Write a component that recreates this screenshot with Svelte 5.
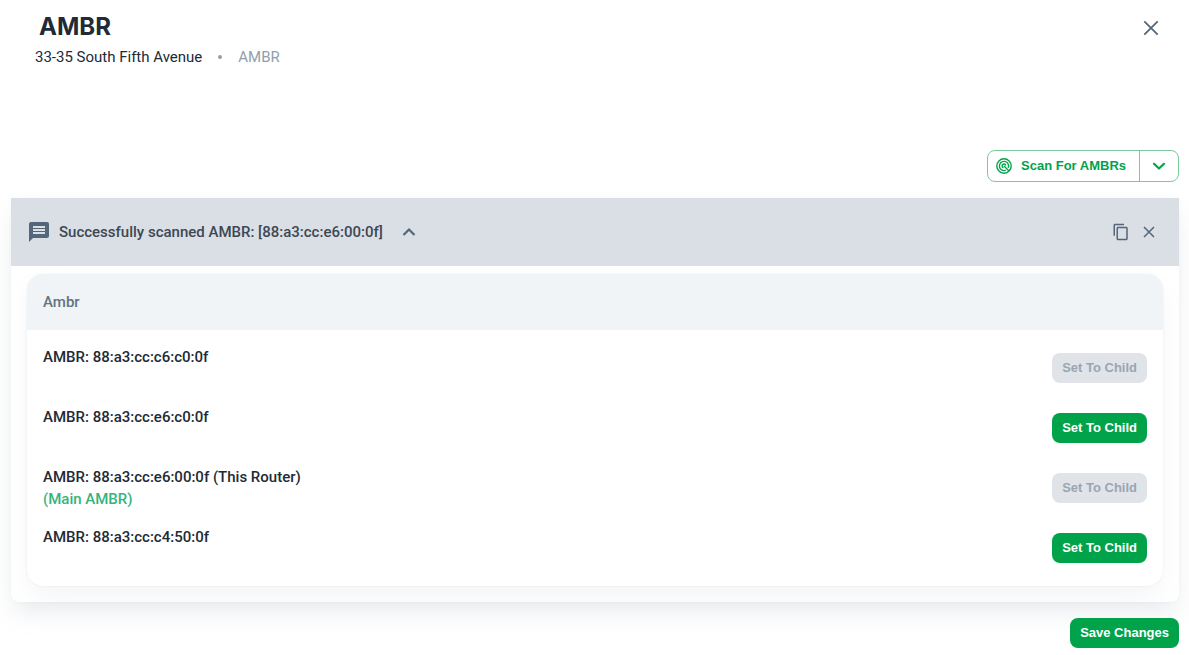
<script lang="ts">
  type Router = { mac: string; current?: boolean; main?: boolean; canSetChild: boolean };

  let title = "AMBR";
  let address = "33-35 South Fifth Avenue";
  let expanded = true;
  let showResult = true;
  let scanned = "88:a3:cc:e6:00:0f";

  let routers: Router[] = [
    { mac: "88:a3:cc:c6:c0:0f", canSetChild: false },
    { mac: "88:a3:cc:e6:c0:0f", canSetChild: true },
    { mac: "88:a3:cc:e6:00:0f", current: true, main: true, canSetChild: false },
    { mac: "88:a3:cc:c4:50:0f", canSetChild: true },
  ];

  function setToChild(mac: string) {
    routers = routers.map((r) => (r.mac === mac ? { ...r, canSetChild: false } : r));
  }

  function copyMessage() {
    navigator.clipboard?.writeText(`Successfully scanned AMBR: [${scanned}]`);
  }
</script>

<div class="dialog">
  <header class="header">
    <div>
      <h1>{title}</h1>
      <div class="subtitle">
        <span>{address}</span>
        <span class="dot"></span>
        <span class="muted">AMBR</span>
      </div>
    </div>
    <button class="icon-button" type="button" aria-label="Close">
      <svg width="24" height="24" viewBox="0 0 24 24"><path d="m5.300 5.300 13.400 13.400M18.700 5.300 5.300 18.700" fill="none" stroke="currentColor" stroke-width="1.800" /></svg>
    </button>
  </header>

  <div class="toolbar">
    <div class="split-button">
      <button class="scan" type="button">
        <svg width="16" height="16" viewBox="0 0 16 16" fill="none" stroke="currentColor" stroke-width="1.4">
          <circle cx="8" cy="8" r="7.200" />
          <path d="M9.800 12.200A4.600 4.600 0 1 1 12.200 9.800" />
          <path d="M7.500 9.800A1.900 1.900 0 1 1 9.800 7.500M8 8l5 5" />
        </svg>
        Scan For AMBRs
      </button>
      <button class="more" type="button" aria-label="More scan options">
        <svg width="14" height="14" viewBox="0 0 14 14"><path d="M2 4.800 7 9.500l5-4.700" fill="none" stroke="currentColor" stroke-width="2.200" stroke-linecap="round" stroke-linejoin="round" /></svg>
      </button>
    </div>
  </div>

  {#if showResult}
    <section class="result">
      <div class="result-bar">
        <svg class="message-icon" width="24" height="24" viewBox="0 0 24 24"><path fill="currentColor" d="M20 2H4.010c-1.100 0-2 .9-2 2L2 22l4-4h14c1.100 0 2-.9 2-2V4c0-1.100-.9-2-2-2zm-2 12H6v-2h12v2zm0-3H6V9h12v2zm0-3H6V6h12v2z" /></svg>
        <span class="message">Successfully scanned AMBR: [{scanned}]</span>
        <button class="icon-button" type="button" aria-label="Toggle details" aria-expanded={expanded} on:click={() => (expanded = !expanded)}>
          <svg class:collapsed={!expanded} width="20" height="20" viewBox="0 0 20 20"><path d="M4.500 13 10 7.500l5.500 5.500" fill="none" stroke="currentColor" stroke-width="2.200" /></svg>
        </button>
        <div class="result-actions">
          <button class="icon-button" type="button" aria-label="Copy message" on:click={copyMessage}>
            <svg width="18" height="18" viewBox="0 0 24 24"><path fill="currentColor" d="M16 1H4c-1.100 0-2 .9-2 2v14h2V3h12V1zm3 4H8c-1.100 0-2 .9-2 2v14c0 1.100.9 2 2 2h11c1.100 0 2-.9 2-2V7c0-1.100-.9-2-2-2zm0 16H8V7h11v14z" /></svg>
          </button>
          <button class="icon-button" type="button" aria-label="Dismiss" on:click={() => (showResult = false)}>
            <svg width="18" height="18" viewBox="0 0 18 18"><path d="m4 4 10 10M14 4 4 14" fill="none" stroke="currentColor" stroke-width="1.500" /></svg>
          </button>
        </div>
      </div>

      {#if expanded}
        <div class="details">
          <div class="card">
            <table>
              <thead>
                <tr><th colspan="2">Ambr</th></tr>
              </thead>
              <tbody>
                {#each routers as router (router.mac)}
                  <tr>
                    <td>
                      <div>AMBR: {router.mac}{#if router.current}{" "}(This Router){/if}</div>
                      {#if router.main}
                        <div class="main-label">(Main AMBR)</div>
                      {/if}
                    </td>
                    <td class="action">
                      <button class="primary" type="button" disabled={!router.canSetChild} on:click={() => setToChild(router.mac)}>Set To Child</button>
                    </td>
                  </tr>
                {/each}
              </tbody>
            </table>
          </div>
        </div>
      {/if}
    </section>
  {/if}

  <div class="footer">
    <button class="primary" type="button">Save Changes</button>
  </div>
</div>

<style>
  :global(body) {
    background: #fff;
  }

  .dialog {
    padding: 11px 10px 7px 11px;
    font-family: Roboto, "Liberation Sans", sans-serif;
    font-size: 15px;
    line-height: 22px;
    color: #212b36;
  }

  button {
    font-family: "Liberation Sans", Arial, sans-serif;
    font-size: 13px;
    line-height: 22px;
    font-weight: 700;
    cursor: pointer;
  }

  svg {
    display: block;
  }

  .header {
    display: flex;
    justify-content: space-between;
    align-items: flex-start;
    padding: 0 11px 0 24px;
  }

  h1 {
    margin: 0;
    padding-left: 4px;
    font-family: Inter, "Liberation Sans", sans-serif;
    font-size: 24px;
    line-height: 32px;
    font-weight: 700;
  }

  .subtitle {
    display: flex;
    align-items: center;
    gap: 16px;
    margin-top: 3px;
  }

  .dot {
    width: 4px;
    height: 4px;
    border-radius: 50%;
    background: #919eab;
  }

  .muted {
    color: #919eab;
  }

  .icon-button {
    display: flex;
    padding: 5px;
    border: 0;
    background: none;
    color: #54667a;
  }

  .toolbar {
    display: flex;
    justify-content: flex-end;
    margin-top: 82px;
  }

  .split-button {
    display: flex;
    border: 1px solid #79cb9b;
    border-radius: 8px;
  }

  .split-button button {
    display: flex;
    align-items: center;
    height: 30px;
    border: 0;
    background: none;
    color: #00a34a;
  }

  .split-button .scan {
    gap: 9px;
    padding: 0 13px 0 8px;
  }

  .split-button .more {
    padding: 0 12px;
    border-left: 1px solid #79cb9b;
  }

  .result {
    margin-top: 16px;
    border-radius: 0 0 8px 8px;
    box-shadow: 0 0 2px rgba(145, 158, 171, 0.08), 0 12px 24px -4px rgba(145, 158, 171, 0.24);
  }

  .result-bar {
    display: flex;
    align-items: center;
    height: 68px;
    padding: 0 16px;
    background: #dadee5;
    color: #54667a;
  }

  .message {
    margin: 0 11px 0 8px;
    font-weight: 500;
    color: #3d4854;
  }

  .collapsed {
    transform: rotate(180deg);
  }

  .result-actions {
    display: flex;
    margin-left: auto;
  }

  .details {
    padding: 8px 16px 16px;
    border-radius: 0 0 8px 8px;
    overflow: hidden;
  }

  .card {
    padding-bottom: 16px;
    border-radius: 16px;
    box-shadow: 0 0 2px rgba(145, 158, 171, 0.2), 0 12px 24px -4px rgba(145, 158, 171, 0.12);
  }

  table {
    width: 100%;
    border-collapse: collapse;
  }

  th {
    height: 56px;
    padding: 0 16px;
    border-radius: 16px 16px 0 0;
    background: #f0f4f7;
    color: #637381;
    font-weight: 500;
    text-align: left;
  }

  td {
    height: 60px;
    box-sizing: border-box;
    padding: 16px 16px 0;
    font-weight: 500;
    vertical-align: top;
  }

  td.action {
    padding-top: 23px;
    text-align: right;
  }

  .main-label {
    color: #36b37e;
  }

  .primary {
    height: 30px;
    padding: 0 10px;
    border: 0;
    border-radius: 8px;
    background: #00a34a;
    color: #fff;
    vertical-align: top;
  }

  .primary:disabled {
    background: #e0e4e9;
    color: #9aa6b2;
    cursor: default;
  }

  .footer {
    display: flex;
    justify-content: flex-end;
    margin-top: 16px;
  }
</style>
